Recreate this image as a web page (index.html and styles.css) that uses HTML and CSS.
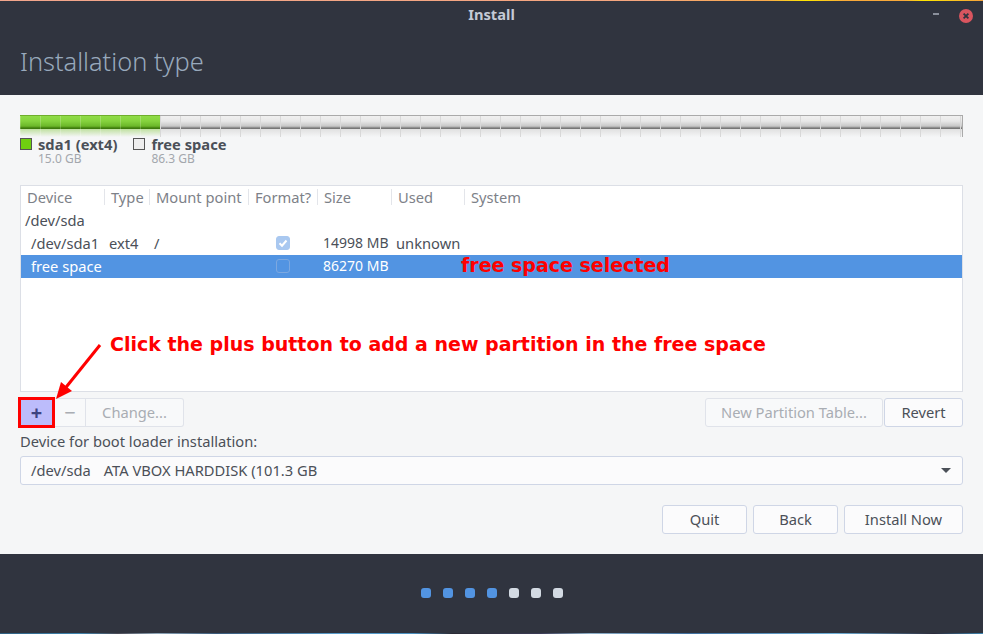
FILE: index.html
```html
<!DOCTYPE html>
<html lang="en">
<head>
    <meta charset="UTF-8">
    <title>Install</title>
    <link rel="stylesheet" href="styles.css">
</head>
<body>
<div class="window">
    <header class="top">
        <div class="titlebar">
            <span class="titlebar-text">Install</span>
            <span class="minimize"></span>
            <span class="close">
                <svg width="14" height="14" viewBox="0 0 14 14"><circle cx="7" cy="7" r="7" fill="#d9555f"/><path d="M4.6 4.6l4.8 4.8M9.4 4.6l-4.8 4.8" stroke="#30343f" stroke-width="1.8"/></svg>
            </span>
        </div>
        <h1>Installation type</h1>
    </header>

    <main class="content">
        <div class="bar">
            <div class="bar-used"></div>
            <div class="bar-free"></div>
        </div>
        <div class="legend">
            <div class="legend-item">
                <span class="swatch swatch-green"></span>
                <div class="legend-text"><strong>sda1 (ext4)</strong><small>15.0 GB</small></div>
            </div>
            <div class="legend-item">
                <span class="swatch swatch-free"></span>
                <div class="legend-text"><strong>free space</strong><small>86.3 GB</small></div>
            </div>
        </div>

        <div class="table">
            <div class="row table-head">
                <span class="cell">Device</span>
                <span class="cell">Type</span>
                <span class="cell">Mount point</span>
                <span class="cell">Format?</span>
                <span class="cell">Size</span>
                <span class="cell">Used</span>
                <span class="cell">System</span>
            </div>
            <div class="row row-disk"><span>/dev/sda</span></div>
            <div class="row row-part">
                <span class="cell-device">/dev/sda1</span>
                <span class="cell-type">ext4</span>
                <span class="cell-mount">/</span>
                <span class="cell-check"><span class="check check-on">
                    <svg width="14" height="14" viewBox="0 0 14 14"><path d="M3.5 7.3l2.5 2.4L10.5 4.5" fill="none" stroke="#fff" stroke-width="2"/></svg>
                </span></span>
                <span class="cell-size">14998 MB</span>
                <span class="cell-used">unknown</span>
                <span></span>
            </div>
            <div class="row row-part row-selected">
                <span class="cell-device">free space</span>
                <span class="cell-type"></span>
                <span class="cell-mount"></span>
                <span class="cell-check"><span class="check"></span></span>
                <span class="cell-size">86270 MB</span>
                <span class="cell-used"></span>
                <span></span>
            </div>
        </div>

        <div class="toolbar">
            <div class="btn-group">
                <button class="btn-icon btn-plus">+</button>
                <button class="btn-icon btn-minus" disabled>−</button>
                <button class="btn-change" disabled>Change...</button>
            </div>
            <div class="toolbar-right">
                <button class="btn-table" disabled>New Partition Table...</button>
                <button class="btn-revert">Revert</button>
            </div>
        </div>

        <label class="boot-label">Device for boot loader installation:</label>
        <div class="combo">
            <span>/dev/sda<span class="combo-model">ATA VBOX HARDDISK (101.3 GB</span></span>
            <span class="combo-arrow"></span>
        </div>

        <div class="actions">
            <button class="btn-quit">Quit</button>
            <button class="btn-back">Back</button>
            <button class="btn-install">Install Now</button>
        </div>

        <!-- red notes drawn on top of the screenshot -->
        <span class="note note-selected">free space selected</span>
        <span class="note note-plus">Click the plus button to add a new partition in the free space</span>
        <svg class="note-arrow" width="50" height="58" viewBox="0 0 50 58">
            <path d="M45 2L8 48" stroke="#f00" stroke-width="3" fill="none"/>
            <path d="M1 56L6 39L17 48Z" fill="#f00"/>
        </svg>
    </main>

    <footer class="bottom">
        <div class="dots">
            <span class="dot dot-done"></span>
            <span class="dot dot-done"></span>
            <span class="dot dot-done"></span>
            <span class="dot dot-done"></span>
            <span class="dot"></span>
            <span class="dot"></span>
            <span class="dot"></span>
        </div>
    </footer>
</div>
</body>
</html>
```

FILE: styles.css
```css
* {
    box-sizing: border-box;
}
body {
    margin: 0;
    font-family: "Noto Sans", "Open Sans", sans-serif;
    font-size: 14.7px;
    color: #4b5058;
    overflow: hidden;
}
button {
    font-family: inherit;
    font-size: 14.7px;
    color: #4b5058;
    background: #fbfbfc;
    border: 1px solid #cfd6e6;
    border-radius: 3px;
    padding: 0 0 2px;
    height: 29px;
}
button:disabled {
    color: #a9adb3;
    background: #f8f9fa;
    border-color: #e0e3ea;
}
.window {
    width: 983px;
    height: 634px;
    display: flex;
    flex-direction: column;
    background: #f5f6f7;
}

/* header */
.top {
    height: 95px;
    background:
        linear-gradient(to right, #f2a58c 0, #f5a67e 65%, #f8a94a 78%, #ffe600 82%, #f9a93a 86%, #f9a93a 92%, #ffe600 94%, #f5a13c 100%) top / 100% 1px no-repeat,
        #30343f;
    padding-top: 1px;
}
.titlebar {
    height: 28px;
    display: flex;
    align-items: center;
    justify-content: center;
    position: relative;
    padding-bottom: 2px;
}
.titlebar-text {
    color: #c5cad6;
    font-size: 14.7px;
    font-weight: 700;
}
.minimize {
    position: absolute;
    left: 933px;
    top: 12px;
    width: 6px;
    height: 2px;
    background: #8a8f9b;
}
.close {
    position: absolute;
    left: 959px;
    top: 6px;
    width: 14px;
    height: 14px;
}
.top h1 {
    margin: 16px 0 0 20px;
    font-size: 25.4px;
    line-height: 32px;
    font-weight: 300;
    color: #98a9bc;
}

/* partition bar */
.content {
    flex: 1;
    position: relative;
    padding: 20px 20px 0;
}
.bar {
    height: 22px;
    display: flex;
}
.bar-used,
.bar-free {
    height: 22px;
    border-top: 1px solid #aaa;
}
.bar-used {
    width: 140px;
    border-top-color: #6fae2c;
    background:
        repeating-linear-gradient(to right, transparent 0, transparent 19px, rgba(255,255,255,0.2) 19px, rgba(255,255,255,0.2) 20px) 1px 0,
        linear-gradient(to bottom, #8fdc47 0, #86d33e 5px, #6cb82a 10px, #5a9e1c 11px, #3d7a0c 12px, #3d7a0c 13px, #bfe0a0 13px, #f5f6f7 21px);
}
.bar-free {
    flex: 1;
    border-right: 1px solid #aaa;
    background:
        repeating-linear-gradient(to right, #d8d8d8 0, #d8d8d8 1px, transparent 1px, transparent 20px),
        linear-gradient(to bottom, #f0f0f0 0, #e8e8e8 5px, #c8c8c8 10px, #aaa 11px, #777 12px, #777 13px, #e0e0e0 13px, #f5f6f7 21px);
}
.legend {
    display: flex;
    gap: 16px;
    height: 48px;
}
.legend-item {
    display: flex;
    gap: 6px;
}
.swatch {
    width: 12px;
    height: 12px;
    margin-top: 1px;
    border: 1px solid #555;
}
.swatch-green {
    background: #6fd010;
}
.swatch-free {
    background: #eee;
}
.legend-text {
    display: flex;
    flex-direction: column;
}
.legend-text strong {
    display: block;
    font-size: 14.7px;
    line-height: 15px;
    color: #4b5058;
}
.legend-text small {
    display: block;
    font-size: 12px;
    line-height: 14px;
    color: #a3a7ad;
}

/* partition table */
.table {
    height: 207px;
    background: #fff;
    border: 1px solid #dcdfe6;
    overflow: hidden;
}
.row {
    display: grid;
    grid-template-columns: 83px 45px 99px 69px 74px 73px 1fr;
    align-items: center;
    padding-bottom: 2px;
}
.table-head {
    height: 23px;
    color: #7d8188;
}
.cell {
    padding-left: 6px;
    border-left: 1px solid #e3e5ea;
    line-height: 16px;
    white-space: nowrap;
}
.cell:first-child {
    border-left: none;
}
.row-disk {
    height: 23px;
    padding-left: 4px;
    display: flex;
    color: #4b5058;
}
.row-part {
    height: 23px;
}
.cell-device {
    padding-left: 10px;
}
.cell-type {
    padding-left: 5px;
}
.cell-mount {
    padding-left: 5px;
}
.cell-check {
    display: flex;
    justify-content: center;
    padding-left: 1px;
}
.cell-size {
    padding-left: 6px;
    font-size: 14px;
    white-space: nowrap;
}
.cell-used {
    padding-left: 5px;
}
.check {
    width: 14px;
    height: 14px;
    border-radius: 3px;
    border: 1px solid #7ca8e0;
    display: block;
}
.check-on {
    background: #a9c8f0;
    border-color: #a9c8f0;
}
.check-on svg {
    display: block;
    margin: -1px;
}
.row-selected {
    background: #5294e2;
    color: #fff;
}

/* buttons below the table */
.toolbar {
    display: flex;
    justify-content: space-between;
    margin-top: 6px;
}
.btn-group {
    display: flex;
}
.btn-icon {
    width: 31px;
    font-size: 20px;
    line-height: 20px;
    padding: 0;
}
.btn-plus {
    width: 37px;
    height: 31px;
    margin: -1px 0 -1px -2px;
    background: #bcbcfb;
    color: #3d4380;
    border: 3px solid #f00;
    border-radius: 0;
    font-weight: 700;
}
.btn-minus {
    border-width: 1px 1px 1px 0;
    border-radius: 0;
}
.btn-change {
    width: 98px;
    border-width: 1px 1px 1px 0;
    border-radius: 0 3px 3px 0;
}
.toolbar-right {
    display: flex;
    gap: 1px;
}
.btn-table {
    width: 178px;
}
.btn-revert {
    width: 79px;
}
.boot-label {
    display: block;
    margin-top: 5px;
    line-height: 19px;
    height: 24px;
}
.combo {
    height: 29px;
    display: flex;
    align-items: center;
    justify-content: space-between;
    padding: 0 11px 2px 10px;
    background: #fbfbfc;
    border: 1px solid #cfd6e6;
    border-radius: 3px;
}
.combo-model {
    margin-left: 13px;
}
.combo-arrow {
    width: 0;
    height: 0;
    margin-top: 2px;
    border-left: 5px solid transparent;
    border-right: 5px solid transparent;
    border-top: 5px solid #4b5058;
}
.actions {
    display: flex;
    justify-content: flex-end;
    gap: 6px;
    margin-top: 20px;
}
.btn-quit,
.btn-back {
    width: 85px;
}
.btn-install {
    width: 119px;
}

/* annotations */
.note {
    position: absolute;
    color: #f00;
    font-family: "DejaVu Sans", sans-serif;
    font-weight: 700;
    font-size: 19px;
    line-height: 24px;
    white-space: nowrap;
}
.note-selected {
    left: 461px;
    top: 158px;
}
.note-plus {
    left: 110px;
    top: 237px;
}
.note-arrow {
    position: absolute;
    left: 55px;
    top: 248px;
}

/* footer */
.bottom {
    height: 80px;
    background:
        linear-gradient(to right, #2f5f80 0, #3f86b0 8%, #4a4a55 12%, #8fa6b8 16%, #3a5a7a 22%, #5aa0d0 35%, #4a90c0 42%, #2a2a35 46%, #3a3a55 55%, #8fb0c8 60%, #3f6f9f 70%, #6fb0d8 85%, #2a2a3a 95%, #3f86b0 100%) bottom / 100% 1px no-repeat,
        #30343f;
    display: flex;
    justify-content: center;
}
.dots {
    display: flex;
    gap: 12px;
    margin-top: 34px;
}
.dot {
    width: 10px;
    height: 10px;
    border-radius: 3px;
    background: #d3dae3;
}
.dot-done {
    background: #5294e2;
}
```
